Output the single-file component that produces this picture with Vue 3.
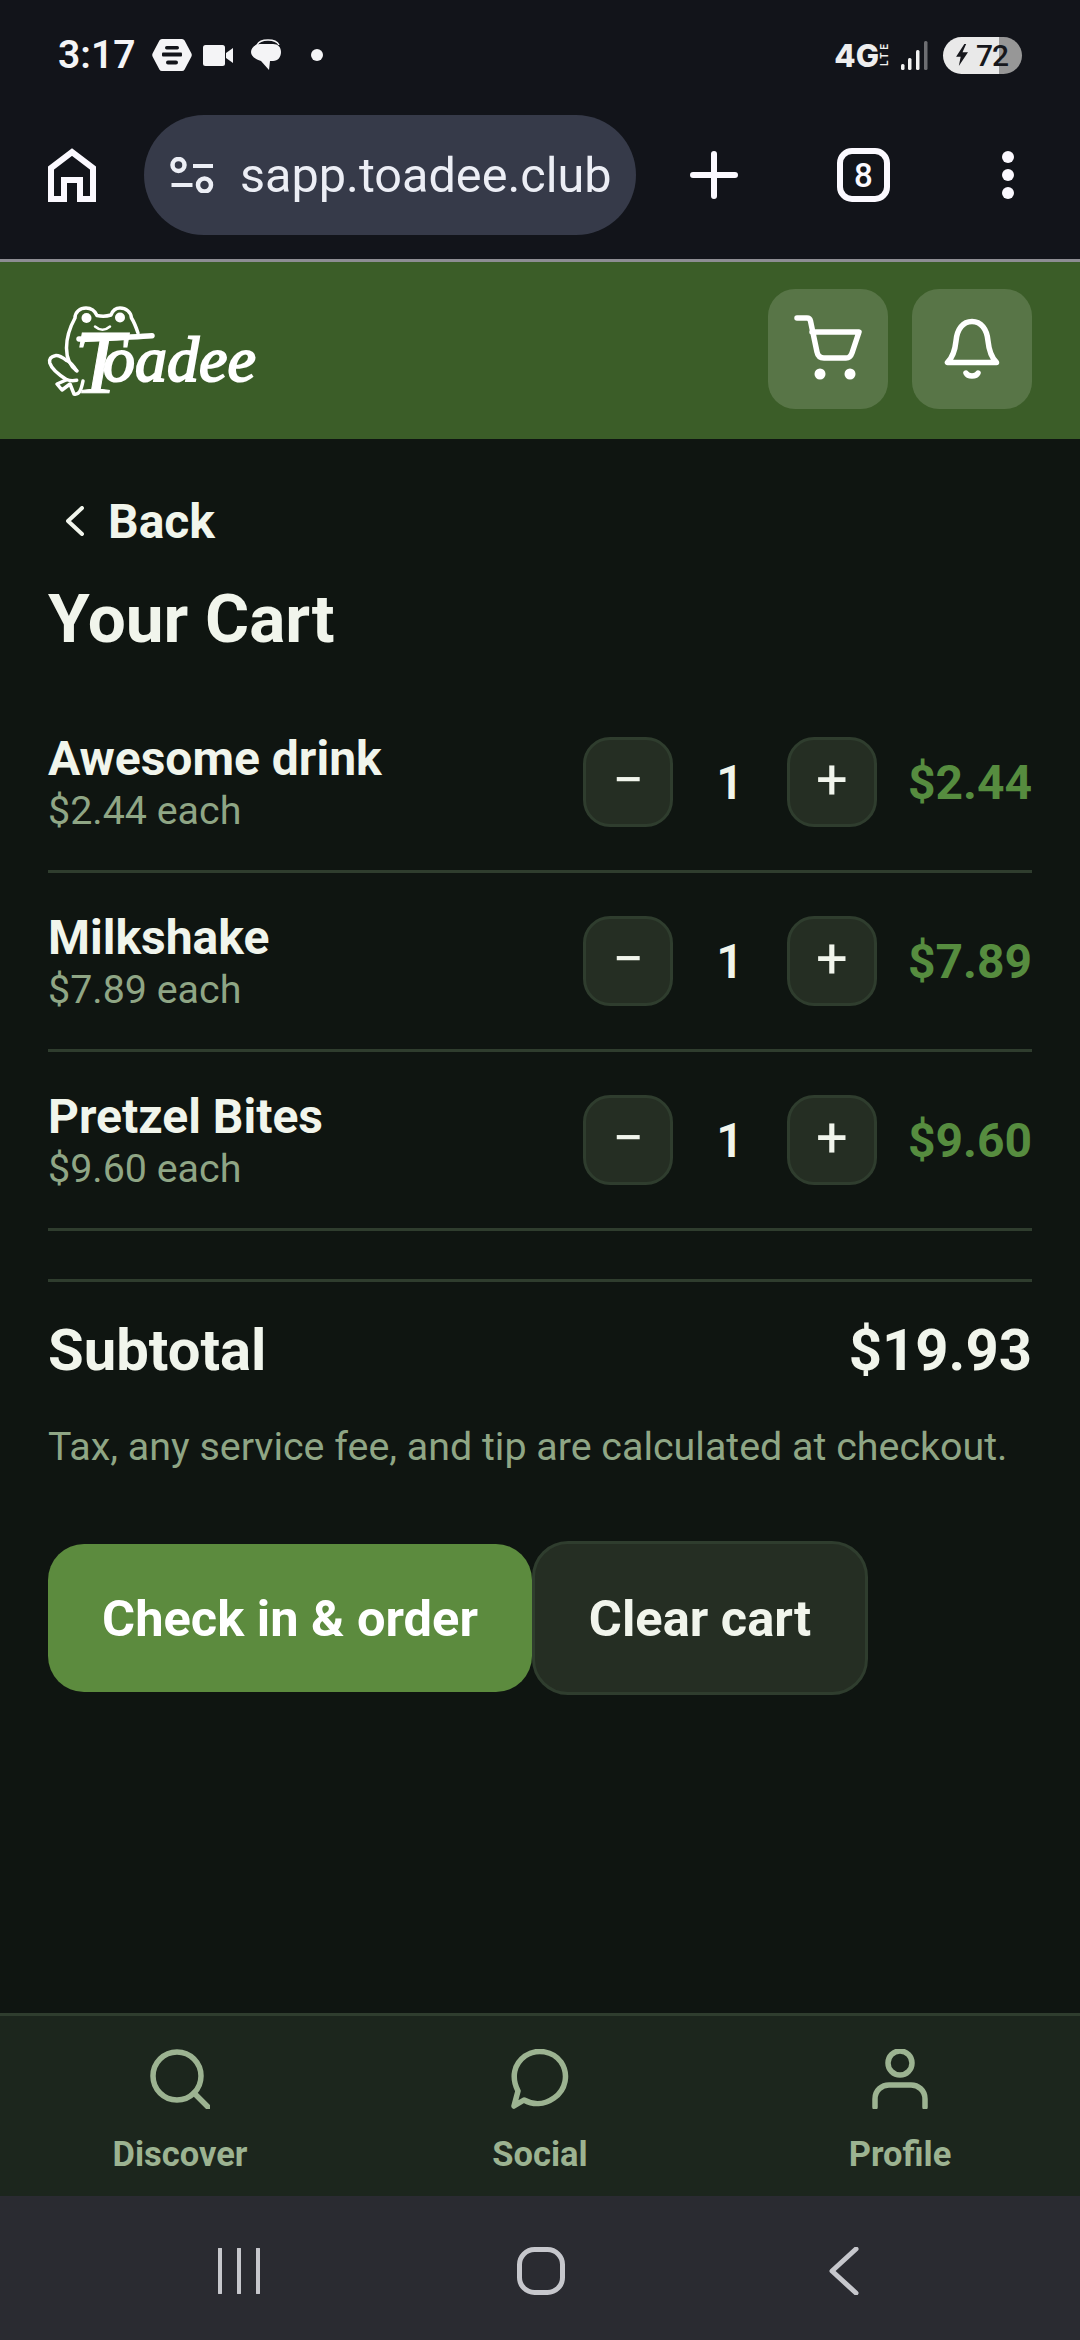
<template>
  <div class="phone">
    <!-- android status bar -->
    <div class="status">
      <div class="status-left">
        <span class="time">3:17</span>
        <svg class="st-hex" viewBox="0 0 40 34">
          <path d="M10 1h20a3 3 0 0 1 2.600 1.500l6.600 12.500a4 4 0 0 1 0 4l-6.600 12.500a3 3 0 0 1-2.600 1.500H10a3 3 0 0 1-2.600-1.500L.8 19a4 4 0 0 1 0-4L7.400 2.500A3 3 0 0 1 10 1z" fill="#f4f4f6"/>
          <rect x="10" y="14.500" width="20" height="4" rx="1" fill="#12141a"/>
          <rect x="13" y="8" width="14" height="3.500" rx="1.700" fill="#12141a"/>
          <rect x="14" y="22.500" width="12" height="4" rx="2" fill="#12141a"/>
        </svg>
        <svg class="st-cam" viewBox="0 0 30 21">
          <rect x="0" y="0" width="22" height="21" rx="2.500" fill="#f4f4f6"/>
          <path d="M23 8l7-5v15l-7-5z" fill="#f4f4f6"/>
        </svg>
        <svg class="st-chat" viewBox="0 0 32 32">
          <path d="M7 6C9 2 14 1 18 1s9 1 11 5" fill="none" stroke="#f4f4f6" stroke-width="1.500"/>
          <path d="M10 5h13c5 0 8 3 8 8s-3 9-8 9h-3l-1 9-8-9C5 20 1 17 1 13s4-8 9-8z" fill="#f4f4f6"/>
        </svg>
        <span class="st-dot"></span>
      </div>
      <div class="status-right">
        <span class="net">4G</span>
        <svg class="st-lte" viewBox="0 0 9 22"><text x="0" y="0" transform="translate(8 22) rotate(-90)" font-size="10" font-weight="700" fill="#eee" font-family="Roboto, sans-serif" textLength="22">LTE</text></svg>
        <svg class="st-signal" viewBox="0 0 27 29">
          <rect x="0" y="23" width="3.500" height="6" rx="1.500" fill="#f2f2f2"/>
          <rect x="7" y="17" width="3.500" height="12" rx="1.500" fill="#f2f2f2"/>
          <rect x="15" y="9" width="3.500" height="20" rx="1.500" fill="#f2f2f2"/>
          <rect x="23" y="0" width="3.500" height="29" rx="1.500" fill="#6d6e72"/>
        </svg>
        <div class="battery">
          <svg class="bolt" viewBox="0 0 16 24"><path d="M10 0L1 14h5l-2 10 10-15H8l4-9z" fill="#16171c"/></svg>
          <span class="batt-num">72</span>
        </div>
      </div>
    </div>

    <!-- chrome toolbar -->
    <div class="toolbar">
      <svg class="tb-home" viewBox="0 0 48 54" fill="none" stroke="#fbf9ff" stroke-width="6">
        <path d="M3 51V20L24 4l21 16v31H32V32H16v19z"/>
      </svg>
      <div class="url">
        <svg class="url-icon" viewBox="0 0 44 36" fill="none" stroke="#eceef5">
          <circle cx="8.500" cy="8" r="6" stroke-width="4.500"/>
          <path d="M23 9h20" stroke-width="4"/>
          <path d="M1.500 28h21" stroke-width="4"/>
          <circle cx="34.500" cy="28" r="6.500" stroke-width="4.500"/>
        </svg>
        <span>sapp.toadee.club</span>
      </div>
      <svg class="tb-plus" viewBox="0 0 48 48" fill="none" stroke="#fbf9ff" stroke-width="6" stroke-linecap="round">
        <path d="M3 24h42M24 3v42"/>
      </svg>
      <div class="tabs">8</div>
      <div class="tb-dots"><i></i><i></i><i></i></div>
    </div>

    <!-- site header -->
    <header class="site-head">
      <svg class="logo" viewBox="0 0 212 96">
        <g fill="none" stroke="#fff" stroke-width="3.500" stroke-linecap="round" stroke-linejoin="round">
          <path d="M90 30C88 24 86 19 83.500 15C83 9 78 5 72 5C68 5 64.500 8 63 12C58 13.500 54 13.500 49 12.500C47 8 43 5 38 5C32 5 27 9 27 15C22 24 18.500 34 18.500 45C18.500 55 22 63 29 68"/>
          <path d="M28 67C25 62 22 59 18.700 57.500C14 54 10 52 7 52.700C3 53.500 .8 56 1.800 60C3 64 8 70 18.700 76.700C22 78 25 78 28.700 77.300"/>
          <path d="M18 77L9 81L14 87L22 81L26 91C31 92 33 88 35 78"/>
          <path d="M47 23.500Q54.500 30 62 23.500" stroke-width="2.500"/>
          <path d="M31 36C50 37 80 34 104 32.700" stroke-width="5.500"/>
        </g>
        <circle cx="38.500" cy="15" r="5" fill="#fff"/>
        <circle cx="72" cy="14.500" r="5" fill="#fff"/>
        <text class="logo-text" fill="#fff" stroke="#fff"><tspan x="26" y="90" font-size="90" stroke-width="1">T</tspan><tspan x="55" y="78" font-size="64" stroke-width="2">oadee</tspan></text>
      </svg>
      <div class="head-btns">
        <button class="head-btn">
          <svg viewBox="0 0 72 72" class="head-ic">
            <path d="M5 5h10c2 0 3 1 3.500 3L25 39c.8 4 3 6 7 6h22c3 0 5-2 6-5l7-21H20"/>
            <circle cx="28" cy="61" r="5.500" class="solid"/>
            <circle cx="58" cy="61" r="5.500" class="solid"/>
          </svg>
        </button>
        <button class="head-btn">
          <svg viewBox="0 0 72 72" class="head-ic">
            <path d="M11.500 49.500H60.500C56 45 53 38 52 28C51 16 45 8.500 36 8.500C27 8.500 21 16 20 28C19 38 16 45 11.500 49.500Z"/>
            <path d="M30 60C32 64 40 64 42 60"/>
          </svg>
        </button>
      </div>
    </header>

    <main class="page">
      <div class="back">
        <svg viewBox="0 0 18 30" class="back-ic"><path d="M16 2L2 15l14 13"/></svg>
        <span>Back</span>
      </div>
      <h1>Your Cart</h1>

      <div class="items">
        <div v-for="item in items" :key="item.name" class="item">
          <div class="item-info">
            <div class="item-name">{{ item.name }}</div>
            <div class="item-each">{{ item.price }} each</div>
          </div>
          <div class="qty">
            <button class="qty-btn">−</button>
            <span class="qty-num">1</span>
            <button class="qty-btn">+</button>
          </div>
          <div class="item-total">{{ item.price }}</div>
        </div>
      </div>

      <div class="subtotal">
        <span>Subtotal</span>
        <span>$19.93</span>
      </div>
      <p class="note">Tax, any service fee, and tip are calculated at checkout.</p>

      <div class="actions">
        <button class="btn-primary">Check in &amp; order</button>
        <button class="btn-clear">Clear cart</button>
      </div>
    </main>

    <!-- bottom tabs -->
    <nav class="tabbar">
      <div class="tab">
        <svg viewBox="0 0 60 60" class="tab-ic"><circle cx="27" cy="27" r="24"/><path d="M44 44l14 14"/></svg>
        <span>Discover</span>
      </div>
      <div class="tab">
        <svg viewBox="0 0 60 60" class="tab-ic"><path d="M4 57l4-15C1 28 4 15 15 7c12-8 28-5 36 6 8 12 5 28-7 36-10 7-21 7-30 2z"/></svg>
        <span>Social</span>
      </div>
      <div class="tab">
        <svg viewBox="0 0 60 60" class="tab-ic"><circle cx="30" cy="14" r="12"/><path d="M5 58V50c0-9 7-14 14-14h22c7 0 14 5 14 14v8"/></svg>
        <span>Profile</span>
      </div>
    </nav>

    <!-- android nav -->
    <div class="sysnav">
      <svg class="sys-recent" viewBox="0 0 44 46"><path d="M3 1v44M22 1v44M41 1v44"/></svg>
      <svg class="sys-home" viewBox="0 0 48 48"><rect x="2.500" y="2.500" width="43" height="43" rx="15"/></svg>
      <svg class="sys-back" viewBox="0 0 30 48"><path d="M27 2L3 24l24 22"/></svg>
    </div>
  </div>
</template>

<script setup>
const items = [
  { name: 'Awesome drink', price: '$2.44' },
  { name: 'Milkshake', price: '$7.89' },
  { name: 'Pretzel Bites', price: '$9.60' }
]
</script>

<style scoped>
.phone {
  width: 1080px;
  height: 2340px;
  display: flex;
  flex-direction: column;
  background: #0f1511;
  font-family: Roboto, "Liberation Sans", sans-serif;
  color: #f1f5ec;
  overflow: hidden;
}

/* status bar */
.status {
  height: 110px;
  flex: none;
  background: #12141a;
  display: flex;
  justify-content: space-between;
  align-items: center;
  padding: 0 58px;
}
.status-left,
.status-right {
  display: flex;
  align-items: center;
}
.time {
  font-size: 39px;
  font-weight: 600;
  color: #f4f4f6;
  margin-right: 17px;
}
.st-hex { width: 40px; height: 34px; margin-right: 11px; }
.st-cam { width: 30px; height: 21px; margin-right: 17px; }
.st-chat { width: 32px; height: 32px; margin-right: 29px; }
.st-dot {
  width: 12px;
  height: 12px;
  border-radius: 50%;
  background: #f4f4f6;
}
.net {
  font-family: Inter, sans-serif;
  font-size: 31px;
  font-weight: 800;
  color: #eeeeee;
  margin-right: 1px;
}
.st-lte { width: 9px; height: 22px; margin-right: 12px; overflow: visible; }
.st-signal { width: 27px; height: 29px; margin-right: 15px; }
.battery {
  width: 79px;
  height: 37px;
  border-radius: 19px;
  background: linear-gradient(90deg, #e9e9e9 71%, #979797 71%);
  display: flex;
  align-items: center;
  padding-left: 12px;
  box-sizing: border-box;
  color: #16171c;
}
.bolt { width: 15px; height: 22px; margin-right: 6px; }
.batt-num {
  font-size: 30px;
  font-weight: 500;
  letter-spacing: -1px;
}

/* toolbar */
.toolbar {
  height: 149px;
  flex: none;
  background: #12141a;
  display: flex;
  align-items: flex-start;
  padding-left: 48px;
  border-bottom: 3px solid #8d8d93;
}
.tb-home { width: 48px; height: 54px; margin-top: 38px; margin-right: 48px; }
.url {
  width: 492px;
  height: 120px;
  margin-top: 5px;
  border-radius: 60px;
  background: #363a49;
  display: flex;
  align-items: center;
  padding-left: 26px;
  box-sizing: border-box;
  font-size: 48.600px;
  color: #eceef5;
  flex: none;
}
.url-icon { width: 44px; height: 36px; margin-right: 26px; flex: none; }
.tb-plus { width: 48px; height: 48px; margin-top: 41px; margin-left: 54px; flex: none; }
.tabs {
  width: 53px;
  height: 54px;
  margin-top: 38px;
  margin-left: 99px;
  border: 6px solid #fbf9ff;
  border-radius: 15px;
  box-sizing: border-box;
  flex: none;
  display: flex;
  align-items: center;
  justify-content: center;
  font-size: 33px;
  font-weight: 500;
  color: #fbf9ff;
}
.tb-dots {
  margin-top: 41px;
  margin-left: 112px;
  display: flex;
  flex-direction: column;
  gap: 6px;
  flex: none;
}
.tb-dots i {
  display: block;
  width: 12px;
  height: 12px;
  border-radius: 50%;
  background: #fbf9ff;
}

/* site header */
.site-head {
  height: 177px;
  flex: none;
  background: #3b5d28;
  display: flex;
  justify-content: space-between;
  align-items: center;
  padding: 0 48px;
}
.logo { width: 212px; height: 96px; overflow: visible; }
.logo-text {
  font-family: "Liberation Serif", serif;
  font-style: italic;
}
.head-btns { display: flex; gap: 24px; margin-bottom: 3px; }
.head-btn {
  width: 120px;
  height: 120px;
  border: none;
  border-radius: 27px;
  background: #587547;
  display: flex;
  align-items: center;
  justify-content: center;
  padding: 0;
}
.head-ic {
  width: 72px;
  height: 72px;
  fill: none;
  stroke: #fff;
  stroke-width: 5.500;
  stroke-linecap: round;
  stroke-linejoin: round;
}
.head-ic .solid { fill: #fff; stroke: none; }

/* cart */
.page {
  flex: 1;
  padding: 0 48px;
  min-height: 0;
}
.back {
  display: flex;
  align-items: center;
  margin-top: 54px;
  height: 56px;
  font-size: 48px;
  font-weight: 700;
}
.back-ic {
  width: 18px;
  height: 30px;
  margin-left: 18px;
  margin-right: 24px;
  fill: none;
  stroke: #f1f5ec;
  stroke-width: 4;
  stroke-linecap: round;
  stroke-linejoin: round;
}
h1 {
  margin: 31px 0 0;
  font-size: 67.500px;
  line-height: 78px;
  font-weight: 700;
}
.items {
  margin-top: 36px;
}
.item {
  height: 179px;
  box-sizing: border-box;
  border-bottom: 3px solid #2f3d2e;
  display: flex;
  align-items: center;
}
.item-info { flex: 1; min-width: 0; }
.item-name {
  font-size: 48px;
  line-height: 56px;
  font-weight: 700;
}
.item-each {
  font-size: 39.400px;
  line-height: 47px;
  color: #8fa685;
}
.qty {
  display: flex;
  align-items: center;
}
.qty-btn {
  width: 90px;
  height: 90px;
  padding: 0 0 5px;
  box-sizing: border-box;
  border: 3px solid #2f3d2e;
  border-radius: 27px;
  background: #252e23;
  color: #f1f5ec;
  font-family: Roboto, sans-serif;
  font-size: 56px;
  font-weight: 400;
}
.qty-num {
  width: 114px;
  text-align: center;
  font-size: 48px;
  font-weight: 600;
}
.item-total {
  width: 155px;
  text-align: right;
  font-size: 48px;
  font-weight: 700;
  color: #568c3f;
}
.subtotal {
  margin-top: 48px;
  border-top: 3px solid #2f3d2e;
  display: flex;
  justify-content: space-between;
  padding-top: 36px;
  font-size: 58px;
  line-height: 64px;
  font-weight: 700;
}
.note {
  margin: 42px 0 0;
  font-size: 39.400px;
  line-height: 46px;
  color: #8fa685;
  white-space: nowrap;
}
.actions {
  margin-top: 71px;
  display: flex;
  align-items: center;
}
.btn-primary,
.btn-clear {
  font-family: Roboto, sans-serif;
  font-size: 50.600px;
  font-weight: 700;
  border-radius: 36px;
  padding: 0;
}
.btn-primary {
  width: 484px;
  height: 148px;
  border: none;
  background: #5c8b3e;
  color: #fff;
  flex: none;
}
.btn-clear {
  width: 336px;
  height: 154px;
  border: 3px solid #2f3d2e;
  background: #252e23;
  color: #f1f5ec;
  flex: none;
}

/* bottom tabs */
.tabbar {
  height: 183px;
  flex: none;
  box-sizing: border-box;
  border-top: 3px solid #2f3d2e;
  background: #1c261d;
  display: flex;
}
.tab {
  flex: 1;
  display: flex;
  flex-direction: column;
  align-items: center;
  padding-top: 33px;
  font-size: 34.500px;
  font-weight: 700;
  color: #9cb391;
}
.tab span { line-height: 42px; margin-top: 24px; }
.tab-ic {
  width: 60px;
  height: 60px;
  fill: none;
  stroke: #9cb391;
  stroke-width: 5.500;
  stroke-linecap: round;
  stroke-linejoin: round;
}

/* android nav */
.sysnav {
  height: 144px;
  flex: none;
  background: #2a2b31;
  position: relative;
}
.sysnav svg {
  position: absolute;
  fill: none;
  stroke: #c6c7cc;
  stroke-linecap: round;
  stroke-linejoin: round;
}
.sys-recent { left: 217px; top: 52px; width: 44px; height: 46px; stroke-width: 4; }
.sys-home { left: 517px; top: 51px; width: 48px; height: 48px; stroke-width: 5; }
.sys-back { left: 829px; top: 51px; width: 30px; height: 48px; stroke-width: 5; }
</style>
